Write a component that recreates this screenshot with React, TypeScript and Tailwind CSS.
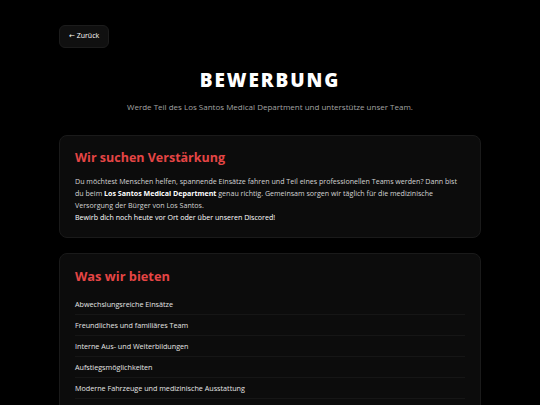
import React from "react";

const items = [
  "Abwechslungsreiche Einsätze",
  "Freundliches und familiäres Team",
  "Interne Aus- und Weiterbildungen",
  "Aufstiegsmöglichkeiten",
  "Moderne Fahrzeuge und medizinische Ausstattung",
];

export default function App() {
  return (
    <div
      className="min-h-screen bg-black text-white"
      style={{ fontFamily: '"Open Sans", "DejaVu Sans", sans-serif' }}
    >
      <div className="mx-auto w-[422px] pt-[25px]">
        <button className="flex h-[23px] items-center rounded-[6px] border border-[#1c1c1c] bg-[#101010] px-[9px] text-[7px] text-white">
          ← Zurück
        </button>
        <h1 className="mt-[19px] text-center text-[19px] font-extrabold leading-[26px] tracking-[0.1em]">
          BEWERBUNG
        </h1>
        <p className="mt-[8px] text-center text-[8px] leading-[12px] text-[#a3a3a3]">
          Werde Teil des Los Santos Medical Department und unterstütze unser Team.
        </p>
        <section className="mt-[22px] rounded-[8px] border border-[#1a1a1a] bg-[#0c0c0c] px-[15px] pb-[14px] pt-[12px]">
          <h2 className="text-[12.5px] font-bold leading-[20px] text-[#e54545]">
            Wir suchen Verstärkung
          </h2>
          <p className="mt-[7px] text-[7.1px] leading-[12px] text-[#d4d4d4]">
            Du möchtest Menschen helfen, spannende Einsätze fahren und Teil eines professionellen Teams werden? Dann bist du beim{" "}
            <span className="font-bold text-white">Los Santos Medical Department</span> genau richtig. Gemeinsam sorgen wir täglich für die medizinische Versorgung der Bürger von Los Santos.
            <br />
            <span className="text-white">Bewirb dich noch heute vor Ort oder über unseren Discored!</span>
          </p>
        </section>
        <section className="mt-[15px] rounded-[8px] border border-[#1a1a1a] bg-[#0c0c0c] px-[15px] pt-[12px] pb-[14px]">
          <h2 className="text-[12.8px] font-bold leading-[20px] text-[#e54545]">
            Was wir bieten
          </h2>
          <ul className="mt-[8px]">
            {items.map((t) => (
              <li
                key={t}
                className="border-b border-[#161616] py-[5px] text-[7.2px] leading-[10px] text-[#e5e5e5]"
              >
                {t}
              </li>
            ))}
          </ul>
        </section>
      </div>
    </div>
  );
}
